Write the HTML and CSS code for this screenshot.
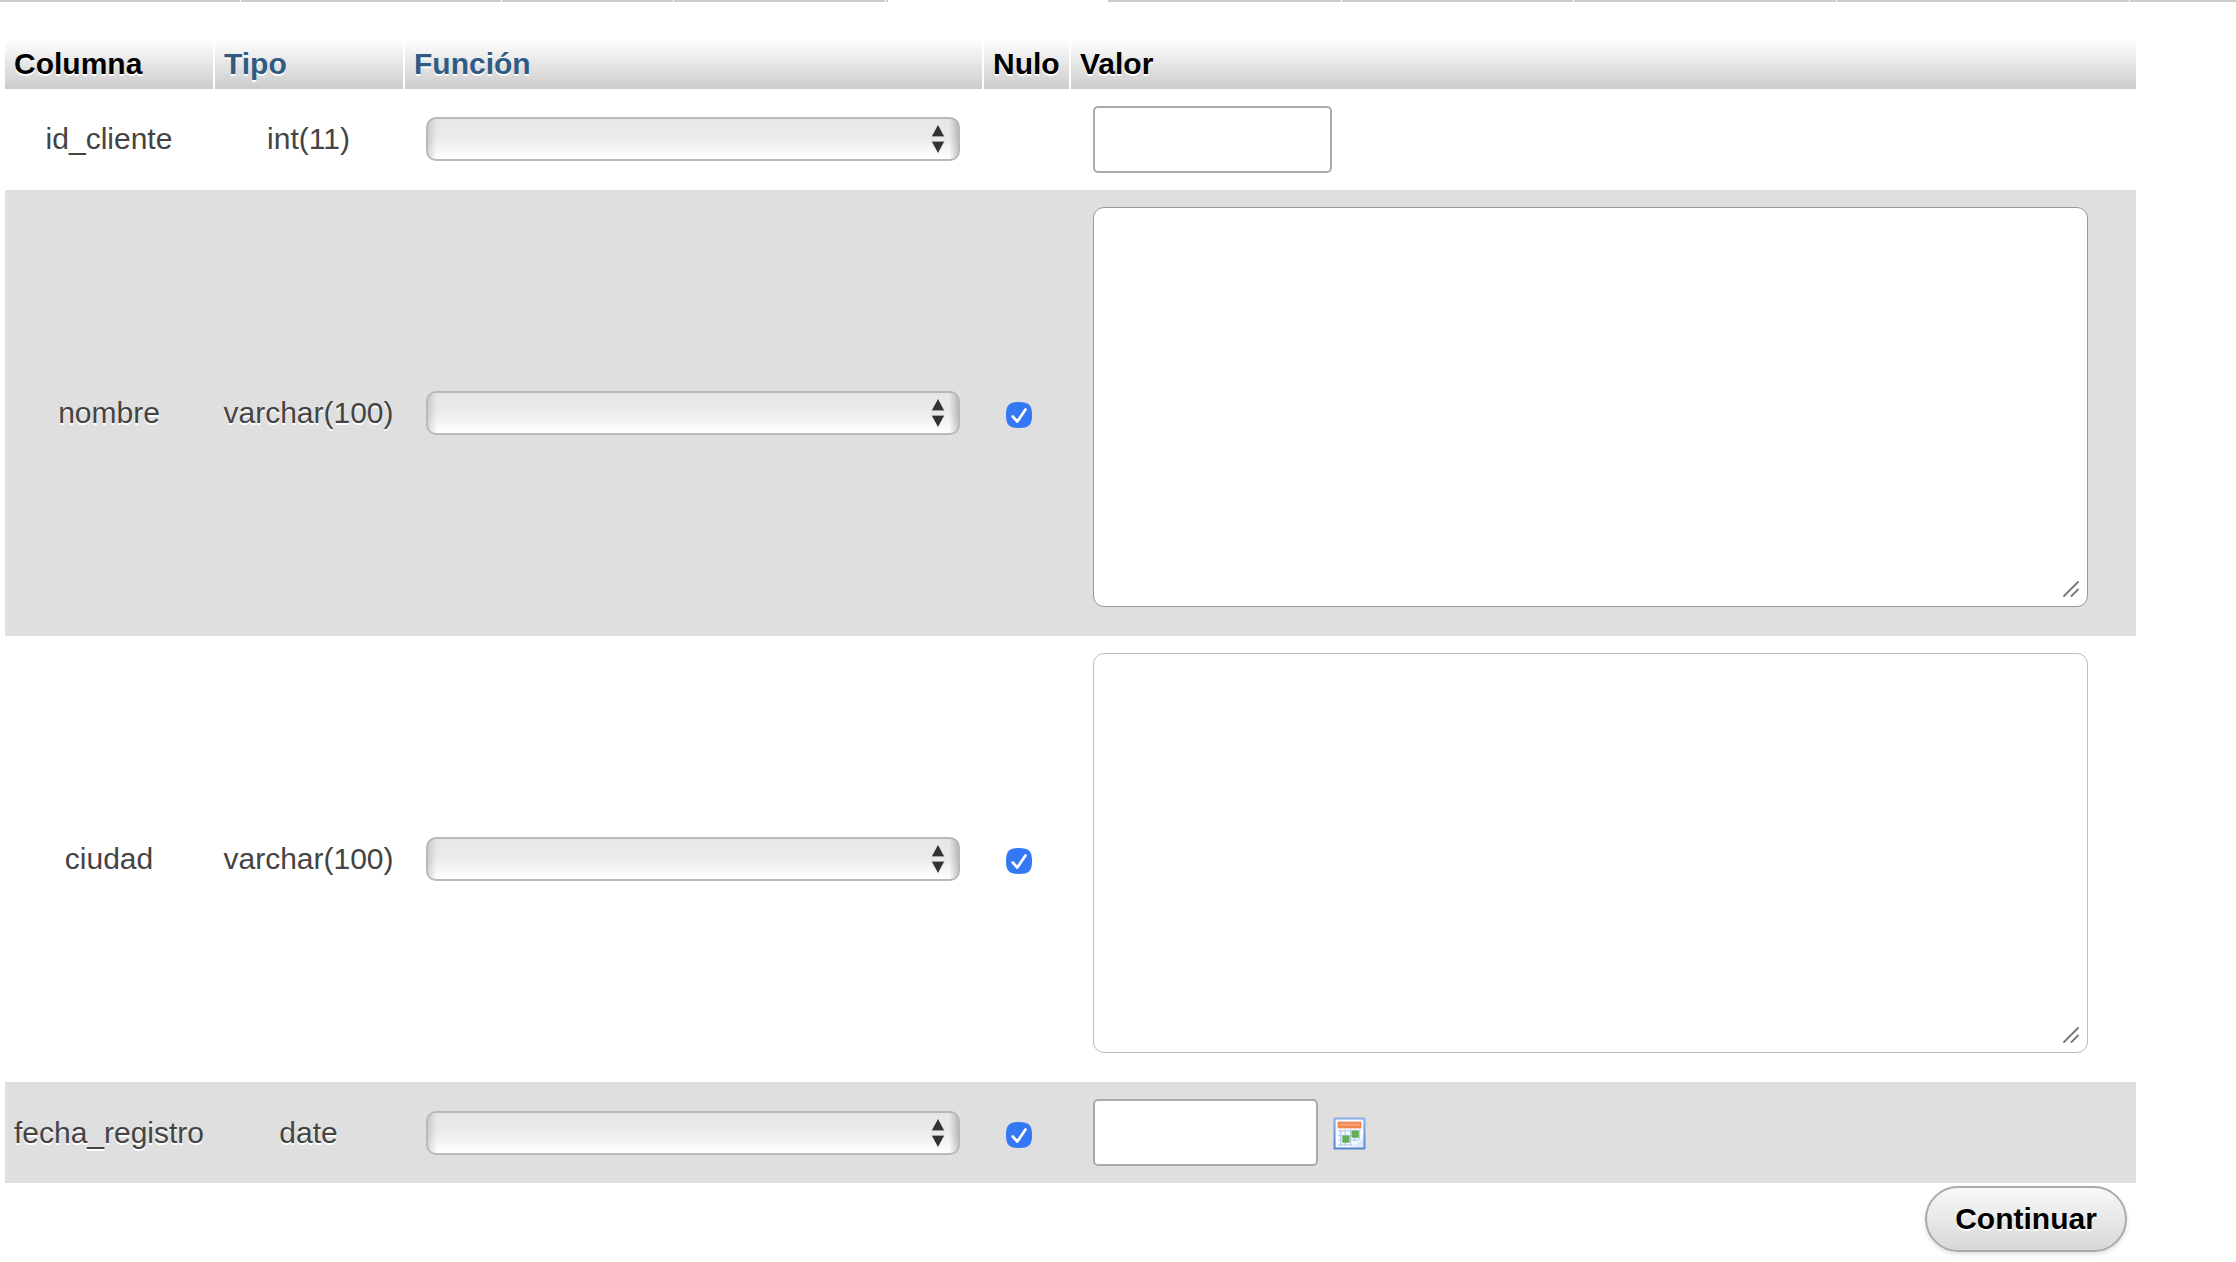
FILE: index.html
```
<!DOCTYPE html>
<html lang="es">
<head>
<meta charset="utf-8">
<title>Insertar</title>
<link rel="stylesheet" href="styles.css">
</head>
<body>
<svg class="defs" width="0" height="0">
  <symbol id="arrows" viewBox="0 0 14 30"><path fill="#ccc" d="M0 11h14v2H0zM0 17h14v2H0z"/><path fill="#333" d="M7 0l6.5 12H.5zM7 30l6.5-12H.5z"/></symbol>
  <symbol id="check" viewBox="0 0 26 26"><path fill="#3478f6" d="M13 0C23 0 26 3 26 13S23 26 13 26 0 23 0 13 3 0 13 0z"/><path d="M6.700 14.500l4.600 5L19.500 7.500" fill="none" stroke="#fff" stroke-width="2.7" stroke-linecap="round" stroke-linejoin="round"/></symbol>
  <symbol id="grip" viewBox="0 0 16 16"><path d="M1 15L15 1M8.500 15L15 8.500" fill="none" stroke="#777" stroke-width="1.8" stroke-linecap="round"/></symbol>
</svg>
<nav class="tabs"><i class="tab t1"></i><i class="tab t2"></i><i class="tab t3"></i><i class="tab t4"></i><i class="tab edge"></i><i class="tab active"></i><i class="tab t5"></i><i class="tab t6"></i><i class="tab t7"></i><i class="tab t8"></i><i class="tab t9"></i></nav>
<main class="form">
  <div class="row head">
    <div class="th">Columna</div><div class="th link">Tipo</div><div class="th link">Función</div><div class="th">Nulo</div><div class="th">Valor</div>
  </div>
  <div class="row short first">
    <div class="cell">id_cliente</div><div class="cell type">int(11)</div>
    <div class="cell"><div class="select"><svg class="arrows"><use href="#arrows"/></svg></div></div>
    <div class="cell"></div>
    <div class="value"><div class="input"></div></div>
  </div>
  <div class="row tall shaded">
    <div class="cell">nombre</div><div class="cell type">varchar(100)</div>
    <div class="cell"><div class="select"><svg class="arrows"><use href="#arrows"/></svg></div></div>
    <div class="cell"><svg class="check"><use href="#check"/></svg></div>
    <div class="value"><div class="area dark"><svg class="grip"><use href="#grip"/></svg></div></div>
  </div>
  <div class="row tall">
    <div class="cell">ciudad</div><div class="cell type">varchar(100)</div>
    <div class="cell"><div class="select"><svg class="arrows"><use href="#arrows"/></svg></div></div>
    <div class="cell"><svg class="check"><use href="#check"/></svg></div>
    <div class="value"><div class="area"><svg class="grip"><use href="#grip"/></svg></div></div>
  </div>
  <div class="row short shaded">
    <div class="cell">fecha_registro</div><div class="cell type">date</div>
    <div class="cell"><div class="select"><svg class="arrows"><use href="#arrows"/></svg></div></div>
    <div class="cell"><svg class="check"><use href="#check"/></svg></div>
    <div class="value"><div class="input date"></div>
      <svg class="calendar" viewBox="0 0 32 32">
        <defs><linearGradient id="frame" x2="0" y2="1"><stop stop-color="#8fb1e8"/><stop offset="1" stop-color="#5584d0"/></linearGradient></defs>
        <rect x=".5" y=".5" width="31" height="31" rx="1" fill="url(#frame)"/>
        <rect x="2.5" y="2.5" width="27" height="27" fill="#f8fbff"/>
        <path fill="#ef8650" d="M4.500 4.500h23v6.500h-23z"/><path fill="#f8a577" d="M6 6.500h20v2H6z"/>
        <path d="M5 13.500h22M5 18h22M5 22.500h20M5 27h14M7.500 12v16M12 12v16M17 12v16M21 12v12M25.500 12v10" stroke="#bccdf0" stroke-width="1.3"/>
        <path fill="#63ad55" d="M18 13h7v7h-7zM9 18h7v7H9z"/>
        <path fill="#dce7fa" d="M20 29l9-9v9z"/>
      </svg></div>
  </div>
  <div class="actions"><button class="submit">Continuar</button></div>
</main>
</body>
</html>
```
FILE: styles.css
```
* { box-sizing: border-box; }
body { margin: 0; height: 1262px; overflow: hidden; background: #fff; color: #444; font: 30px/34px "Liberation Sans", Arial, sans-serif; }
.defs { display: block; }
.tabs { display: flex; height: 2px; gap: 1px; }
.tab { background: #ccc; }
.t1 { width: 240px; }
.t2 { width: 260px; }
.t3 { width: 171px; }
.t4 { width: 211px; }
.edge { width: 2px; }
.active { width: 218px; background: #fff; }
.t5 { width: 233px; }
.t6 { width: 231px; }
.t7 { width: 262px; }
.t8 { width: 292px; }
.t9 { flex: 1; }
.form { width: 2131px; margin: 37px 0 0 5px; }
.row { display: grid; grid-template-columns: 208px 188px 577px 85px 1fr; column-gap: 2px; text-shadow: 0 2px 0 #fff; }
.head { height: 50px; color: #000; font-weight: bold; }
.th { padding: 8px 0 0 9px; background: linear-gradient(#fff, #ccc); }
.link { color: #2f5b84; }
.short { height: 101px; }
.tall { height: 446px; }
.shaded { background: #dfdfdf; }
.cell { display: flex; align-items: center; justify-content: center; }
.first .cell { padding-bottom: 1px; }
.type { padding-right: 1px; }
.select { display: flex; align-items: center; justify-content: flex-end; width: 534px; height: 44px; margin-left: -1px; padding-right: 13px; border: 2px solid #b9b9b9; border-radius: 10px; background: linear-gradient(90deg, #0002, #0000 9px, #0000 calc(100% - 9px), #0003), linear-gradient(#e6e6e6, #ececec 50%, #fff); }
.arrows { width: 14px; height: 28px; }
.check { width: 26px; height: 26px; margin: 4px 15px 0 0; }
.value { display: flex; align-items: flex-start; padding: 17px 0 0 22px; }
.input { width: 239px; height: 67px; border: 2px solid #aaa; border-radius: 5px; background: #fff; }
.date { width: 225px; }
.calendar { width: 33px; height: 33px; margin: 18px 0 0 15px; }
.area { display: flex; align-items: flex-end; justify-content: flex-end; width: 995px; height: 400px; padding: 0 8px 9px 0; border: 1px solid #bbb; border-radius: 11px; background: #fff; }
.dark { border-color: #999; }
.grip { width: 16px; height: 16px; }
.actions { display: flex; justify-content: flex-end; padding: 3px 9px 0 0; }
.submit { width: 202px; height: 66px; padding: 0; border: 2px solid #aaa; border-radius: 33px; background: linear-gradient(#f8f8f8, #d8d8d8); box-shadow: 0 2px 4px #0002; color: #000; font: bold 30px/34px "Liberation Sans", Arial, sans-serif; text-shadow: 0 2px 0 #fff; }
```
